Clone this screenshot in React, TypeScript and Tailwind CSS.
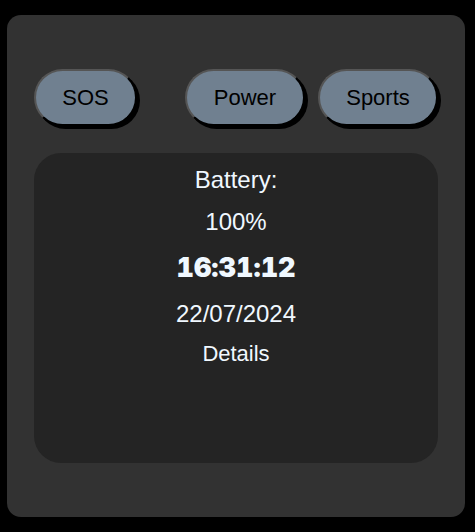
import type { ReactNode } from "react";

function PillButton({ children, className = "" }: { children: ReactNode; className?: string }) {
  return (
    <button
      type="button"
      className={`h-[57px] rounded-full border-2 border-t-[#555555] border-l-[#555555] border-r-black border-b-black bg-[#708090] px-[26px] text-[22px] leading-7 text-black shadow-[3px_3px_0_0_black] ${className}`}
    >
      {children}
    </button>
  );
}

export default function App() {
  return (
    <div className="min-h-screen bg-black pt-[15px] pr-[10px] pb-[15px] pl-[7px] font-['Liberation_Sans',Arial,sans-serif]">
      <main className="rounded-[14px] bg-[#323232] px-[27px] py-[54px]">
        <div className="flex justify-between">
          <PillButton className="min-w-[103px]">SOS</PillButton>
          <div className="flex gap-[13px]">
            <PillButton className="min-w-[120px]">Power</PillButton>
            <PillButton className="min-w-[120px]">Sports</PillButton>
          </div>
        </div>
        <section className="mt-[27px] flex min-h-[310px] flex-col items-center gap-[14px] rounded-[27px] bg-[#242424] pt-[13px] text-2xl leading-7 text-[#f0f8ff]">
          <p>Battery:</p>
          <p>100%</p>
          <time className="my-1 font-['Arial_Black','Inter',sans-serif] text-[27px] leading-7 font-black [font-feature-settings:'calt'_0,'tnum'_1]">
            16:31:12
          </time>
          <p>22/07/2024</p>
          <button type="button" className="-mt-[2px] text-[22px] leading-7">
            Details
          </button>
        </section>
      </main>
    </div>
  );
}
